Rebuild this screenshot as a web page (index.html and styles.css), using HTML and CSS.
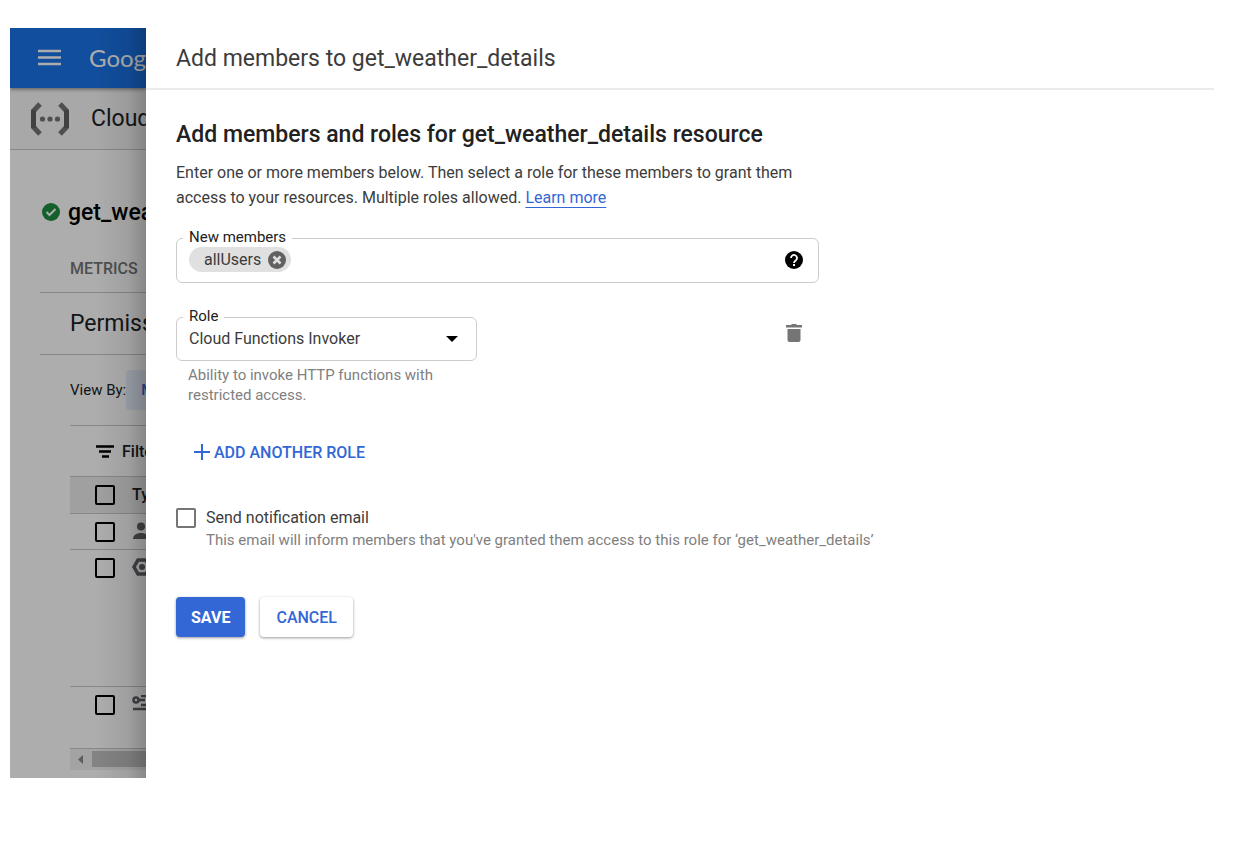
FILE: index.html
```
<!DOCTYPE html>
<html lang="en">
<head>
    <meta charset="UTF-8">
    <title>Add members to get_weather_details</title>
    <link rel="stylesheet" href="styles.css">
</head>
<body>
<div class="screen">
    <!-- console page behind the panel -->
    <div class="console">
        <header class="topbar">
            <svg class="menu" width="24" height="18" viewBox="0 0 24 18"><path d="M0 2h23M0 8.500h23M0 15h23" stroke="#fff" stroke-width="2.500"/></svg>
            <span class="brand">Google</span>
        </header>
        <div class="product">
            <svg width="40" height="34" viewBox="0 0 40 34" fill="none">
                <path d="M10 2L3.500 9v16l6.500 7M30 2l6.500 7v16L30 32" stroke="#757575" stroke-width="5"/>
                <path d="M3.500 8v18M36.500 8v18" stroke="#616161" stroke-width="5"/>
                <g fill="#757575"><circle cx="12.500" cy="17" r="2.600"/><circle cx="20" cy="17" r="2.600"/><circle cx="27.500" cy="17" r="2.600"/></g>
            </svg>
            <span>Cloud Functions</span>
        </div>
        <div class="function">
            <svg width="18" height="18" viewBox="0 0 18 18"><circle cx="9" cy="9" r="9" fill="#1e8e3e"/><path d="M4.500 9l3 3 6-6" stroke="#fff" stroke-width="2" fill="none"/></svg>
            <h1>get_weather_details</h1>
        </div>
        <nav class="tabs"><a href="#">METRICS</a></nav>
        <h2 class="perm">Permissions</h2>
        <div class="viewby">View By: <button type="button">MEMBERS</button></div>
        <div class="listing">
            <div class="filter">
                <svg width="18" height="13" viewBox="0 0 18 13"><path d="M0 1.500h18M3 6.500h12M6 11.500h7" stroke="#000" stroke-width="2.500"/></svg>
                <span>Filter</span>
            </div>
            <table class="members">
                <tr class="head">
                    <th><input type="checkbox" class="check" aria-label="Select all"></th>
                    <th>Type</th>
                </tr>
                <tr>
                    <td><input type="checkbox" class="check" aria-label="Select user"></td>
                    <td><svg width="18" height="18" viewBox="0 0 18 18" fill="#5f6368"><circle cx="9" cy="4.500" r="4"/><path d="M1 17c0-4 4-6 8-6s8 2 8 6z"/></svg></td>
                </tr>
                <tr class="tall">
                    <td><input type="checkbox" class="check" aria-label="Select service agent"></td>
                    <td><svg width="20" height="18" viewBox="0 0 20 18" fill="none"><path d="M6 2h8l4 7-4 7H6L2 9z" stroke="#5f6368" stroke-width="3.500"/><circle cx="10" cy="9" r="3" fill="#5f6368"/></svg></td>
                </tr>
                <tr class="last">
                    <td><input type="checkbox" class="check" aria-label="Select service account"></td>
                    <td><svg width="20" height="16" viewBox="0 0 20 16" fill="none" stroke="#5f6368" stroke-width="2.500"><circle cx="4" cy="5" r="2.500"/><path d="M7 5h6M9 1h11M9 10h11M15 5h5M1 14h19"/></svg></td>
                </tr>
            </table>
            <div class="scroll">
                <svg width="5" height="9" viewBox="0 0 5 9"><path d="M5 0v9L0 4.500z" fill="#8a8a8a"/></svg>
                <div class="thumb"></div>
            </div>
        </div>
    </div>

    <main class="panel">
        <header class="panel-head"><h2>Add members to get_weather_details</h2></header>
        <form class="panel-body">
            <h3>Add members and roles for get_weather_details resource</h3>
            <p class="intro">Enter one or more members below. Then select a role for these members to grant them access to your resources. Multiple roles allowed. <a href="#">Learn more</a></p>

            <div class="field members-field">
                <label for="members">New members</label>
                <span class="chip">allUsers
                    <button type="button" aria-label="Remove allUsers"><svg width="18" height="18" viewBox="0 0 18 18"><circle cx="9" cy="9" r="9" fill="#616161"/><path d="M5.500 5.500l7 7M12.500 5.500l-7 7" stroke="#e0e0e0" stroke-width="2.500"/></svg></button>
                </span>
                <input type="text" id="members">
                <svg width="18" height="18" viewBox="0 0 18 18"><circle cx="9" cy="9" r="9"/><path d="M6 7a3 3 0 1 1 5 2.200c-1.200 1-2 1.300-2 2.800" stroke="#fff" stroke-width="1.800" fill="none"/><path d="M8 13h2v2H8z" fill="#fff"/></svg>
            </div>

            <div class="role-row">
                <div class="field role-field">
                    <label for="role">Role</label>
                    <select id="role"><option>Cloud Functions Invoker</option></select>
                    <svg class="caret" width="12" height="6" viewBox="0 0 12 6"><path d="M0 0h12L6 6z"/></svg>
                </div>
                <button type="button" class="delete" aria-label="Delete role"><svg width="16" height="18" viewBox="0 0 16 18" fill="#757575"><path d="M0 1h5l1-1h4l1 1h5v2.500H0zM1.500 5h13v11a2 2 0 0 1-2 2h-9a2 2 0 0 1-2-2z"/></svg></button>
            </div>
            <p class="hint">Ability to invoke HTTP functions with restricted access.</p>

            <button type="button" class="add"><svg width="16" height="16" viewBox="0 0 16 16"><path d="M8 0v16M0 8h16" stroke="#3367d6" stroke-width="2"/></svg>ADD ANOTHER ROLE</button>

            <div class="notify">
                <input type="checkbox" class="check" id="notify">
                <div>
                    <label for="notify">Send notification email</label>
                    <p>This email will inform members that you've granted them access to this role for ‘get_weather_details’</p>
                </div>
            </div>

            <div class="actions">
                <button type="submit" class="btn save">SAVE</button>
                <button type="button" class="btn cancel">CANCEL</button>
            </div>
        </form>
    </main>
</div>
</body>
</html>
```
FILE: styles.css
```
*
{
    box-sizing: border-box;
    margin: 0;
    padding: 0;
}
body
{
    padding: 28px 40px 28px 10px;
    font-family: Roboto, "Liberation Sans", sans-serif;
    font-size: 16px;
    color: #3c3c3c;
    background: #fff;
}
button, input, select
{
    font: inherit;
    color: inherit;
    border: 0;
    background: none;
}
svg
{
    flex: none;
    display: block;
}
.screen
{
    display: flex;
}

/* dimmed console */
.console
{
    position: relative;
    overflow: hidden;
    flex: none;
    width: 136px;
    padding-bottom: 8px;
    white-space: nowrap;
    color: #202124;
}
.console::after
{
    content: "";
    position: absolute;
    inset: 0;
    background: linear-gradient(to left, rgba(0,0,0,.22), rgba(0,0,0,.08) 18px, rgba(0,0,0,0) 50px), rgba(0,0,0,.32);
}
.topbar
{
    display: flex;
    align-items: center;
    gap: 27px;
    height: 60px;
    padding-left: 28px;
    color: #fff;
    background: #1a73e8;
    box-shadow: 0 1px 4px rgba(0,0,0,.5);
    position: relative;
}
.brand
{
    font-family: Lato, sans-serif;
    font-size: 24px;
    line-height: 24px;
}
.product
{
    display: flex;
    align-items: center;
    gap: 21px;
    height: 62px;
    padding-left: 20px;
    font-size: 23px;
    background: #f8f8f8;
    border-bottom: 1px solid #c8c8c8;
}
.function
{
    display: flex;
    align-items: center;
    gap: 8px;
    height: 94px;
    padding: 30px 0 0 32px;
}
.function h1
{
    font-size: 23px;
    font-weight: 500;
    color: #000;
}
.tabs
{
    margin-left: 30px;
    padding-left: 30px;
    height: 49px;
    line-height: 50px;
    border-bottom: 1px solid #c8c8c8;
}
.tabs a
{
    font-weight: 500;
    color: #757575;
    text-decoration: none;
}
.perm
{
    margin-left: 30px;
    padding-left: 30px;
    height: 62px;
    line-height: 62px;
    font-size: 23px;
    font-weight: 400;
    border-bottom: 1px solid #c8c8c8;
}
.viewby
{
    display: flex;
    align-items: center;
    height: 70px;
    padding-left: 60px;
    font-size: 15px;
}
.viewby button
{
    height: 40px;
    padding: 0 15px;
    font-weight: 500;
    color: #3367d6;
    background: #e8f0fe;
    border-radius: 3px;
}
.listing
{
    margin-left: 60px;
    border-top: 1px solid #c8c8c8;
}
.filter
{
    display: flex;
    align-items: center;
    gap: 8px;
    height: 50px;
    padding-left: 26px;
    font-weight: 500;
}
.members
{
    width: 220px;
    border-collapse: collapse;
    table-layout: fixed;
}
.members tr
{
    height: 36px;
    border-top: 1px solid #c8c8c8;
}
.members th, .members td
{
    padding: 8px 0 0 2px;
    text-align: left;
    vertical-align: top;
    font-weight: 500;
}
.members th:first-child, .members td:first-child
{
    width: 60px;
    padding-left: 25px;
}
.members .head
{
    height: 37px;
    background: #ececec;
}
.members .tall
{
    height: 137px;
}
.members .last
{
    height: 61px;
}
.check
{
    appearance: none;
    display: block;
    flex: none;
    width: 20px;
    height: 20px;
    border: 2px solid #757575;
    border-radius: 2px;
}
.members .check
{
    border-color: #000;
}
.scroll
{
    display: flex;
    align-items: center;
    gap: 9px;
    height: 22px;
    padding-left: 8px;
    background: #f1f1f1;
    border-top: 1px solid #c8c8c8;
}
.thumb
{
    flex: 1;
    height: 16px;
    background: #c1c1c1;
}

/* side panel */
.panel
{
    flex: 1;
    min-width: 0;
}
.panel-head
{
    height: 62px;
    padding-left: 30px;
    line-height: 62px;
    border-bottom: 2px solid #ebebeb;
}
.panel-head h2
{
    font-size: 23px;
    font-weight: 400;
}
.panel-body
{
    padding: 30px;
}
.panel-body h3
{
    font-size: 23px;
    font-weight: 500;
    line-height: 30px;
    color: #212121;
}
.intro
{
    max-width: 643px;
    margin: 10px 0 28px;
    line-height: 25px;
}
.intro a
{
    color: #3367d6;
    text-underline-offset: 4px;
}
.field
{
    position: relative;
    display: flex;
    align-items: center;
    height: 44px;
    border: 1px solid #ccc;
    border-radius: 6px;
}
.field label
{
    position: absolute;
    top: -12px;
    left: 6px;
    padding: 0 6px;
    font-size: 15px;
    line-height: 20px;
    color: #212121;
    background: #fff;
}
.members-field
{
    max-width: 643px;
    height: 45px;
    padding: 0 15px 2px 12px;
}
.members-field input
{
    flex: 1;
    min-width: 0;
    outline: 0;
}
.chip
{
    display: flex;
    align-items: center;
    gap: 7px;
    height: 25px;
    padding: 0 5px 0 15px;
    background: #e0e0e0;
    border-radius: 13px;
}
.role-row
{
    display: flex;
    align-items: center;
    justify-content: space-between;
    max-width: 643px;
    margin-top: 34px;
}
.role-field
{
    width: 301px;
}
.role-field select
{
    appearance: none;
    width: 100%;
    height: 40px;
    padding: 0 36px 2px 12px;
}
.caret
{
    position: absolute;
    right: 18px;
    pointer-events: none;
}
.delete
{
    padding: 0 17px 12px;
}
.hint
{
    width: 301px;
    margin: 4px 0 31px;
    padding: 0 12px;
    font-size: 15px;
    line-height: 20px;
    color: #808080;
}
.add
{
    display: flex;
    align-items: center;
    gap: 4px;
    height: 32px;
    padding-left: 18px;
    font-weight: 500;
    color: #3367d6;
}
.notify
{
    display: flex;
    gap: 10px;
    margin-top: 38px;
}
.notify .check
{
    margin-top: 2px;
}
.notify label
{
    display: block;
    line-height: 24px;
}
.notify p
{
    font-size: 15px;
    line-height: 20px;
    color: #808080;
}
.actions
{
    display: flex;
    gap: 15px;
    margin-top: 47px;
}
.btn
{
    height: 40px;
    padding: 0 15px;
    font-weight: 500;
    border-radius: 4px;
    box-shadow: 0 1px 3px rgba(0,0,0,.4);
}
.save
{
    font-weight: 700;
    color: #fff;
    background: #3367d6;
}
.cancel
{
    padding: 0 16px;
    color: #3367d6;
    background: #fff;
}
```
